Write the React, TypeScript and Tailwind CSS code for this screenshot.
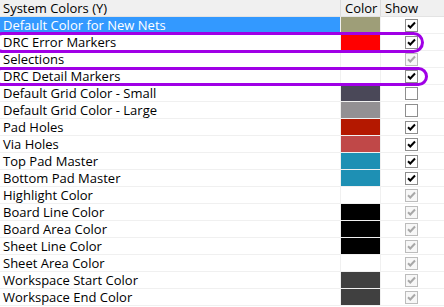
const font = { fontFamily: '"Open Sans", "Liberation Sans", sans-serif' };

type Row = {
  name: string;
  color?: string;
  checked: boolean;
  disabled?: boolean;
  selected?: boolean;
};

const rows: Row[] = [
  { name: 'Default Color for New Nets', color: '#9e9e78', checked: true, selected: true },
  { name: 'DRC Error Markers', color: '#ff0000', checked: true },
  { name: 'Selections', checked: true, disabled: true },
  { name: 'DRC Detail Markers', checked: true },
  { name: 'Default Grid Color - Small', color: '#4a4858', checked: false },
  { name: 'Default Grid Color - Large', color: '#939093', checked: false },
  { name: 'Pad Holes', color: '#b41800', checked: true },
  { name: 'Via Holes', color: '#c04848', checked: true },
  { name: 'Top Pad Master', color: '#1e90b4', checked: true },
  { name: 'Bottom Pad Master', color: '#1e90b4', checked: true },
  { name: 'Highlight Color', checked: true, disabled: true },
  { name: 'Board Line Color', color: '#000000', checked: true, disabled: true },
  { name: 'Board Area Color', color: '#000000', checked: true, disabled: true },
  { name: 'Sheet Line Color', color: '#000000', checked: true, disabled: true },
  { name: 'Sheet Area Color', checked: true, disabled: true },
  { name: 'Workspace Start Color', color: '#404040', checked: true, disabled: true },
  { name: 'Workspace End Color', color: '#404040', checked: true, disabled: true },
];

function CheckBox({ checked, disabled }: { checked: boolean; disabled?: boolean }) {
  return (
    <div
      className={
        'flex h-[13px] w-[13px] items-center justify-center border ' +
        (disabled ? 'border-[#bcbcbc] bg-[#f7f7f7]' : 'border-[#8e8e8e] bg-white')
      }
    >
      {checked && (
        <svg width="9" height="9" viewBox="0 0 9 9">
          <path
            d="M1 4.2 L3.3 6.5 L8 1.5"
            fill="none"
            stroke={disabled ? '#a8a8a8' : '#000'}
            strokeWidth="2"
          />
        </svg>
      )}
    </div>
  );
}

export default function App() {
  return (
    <div className="relative h-[307px] w-[444px] overflow-hidden bg-white text-[13px] text-black" style={font}>
      <div className="grid h-[17px] grid-cols-[341px_40px_1fr] border-b border-[#e3e3e3] bg-[#f0f0f0] leading-[16px]">
        <div className="border-r border-[#dcdcdc] pl-[3px]">System Colors (Y)</div>
        <div className="border-r border-[#dcdcdc] pl-[4px]">Color</div>
        <div className="pl-[4px]">Show</div>
      </div>
      {rows.map((r) => (
        <div key={r.name} className="grid h-[17px] grid-cols-[341px_40px_1fr] border-b border-[#f0f0f0] leading-[16px]">
          <div
            className={
              'border-r border-[#f0f0f0] pl-[3px] ' + (r.selected ? 'bg-[#3399ff] text-white' : '')
            }
          >
            {r.name}
          </div>
          <div className="border-r border-[#f0f0f0]">
            {r.color && <div className="h-full w-full" style={{ backgroundColor: r.color }} />}
          </div>
          <div className="flex items-center pl-[24px]">
            <CheckBox checked={r.checked} disabled={r.disabled} />
          </div>
        </div>
      ))}
      <div className="absolute left-[-8px] top-[32px] h-[21px] w-[432px] rounded-[11px] border-[3px] border-[#a000e6]" />
      <div className="absolute left-[-8px] top-[67px] h-[19px] w-[436px] rounded-[10px] border-[3px] border-[#a000e6]" />
    </div>
  );
}
